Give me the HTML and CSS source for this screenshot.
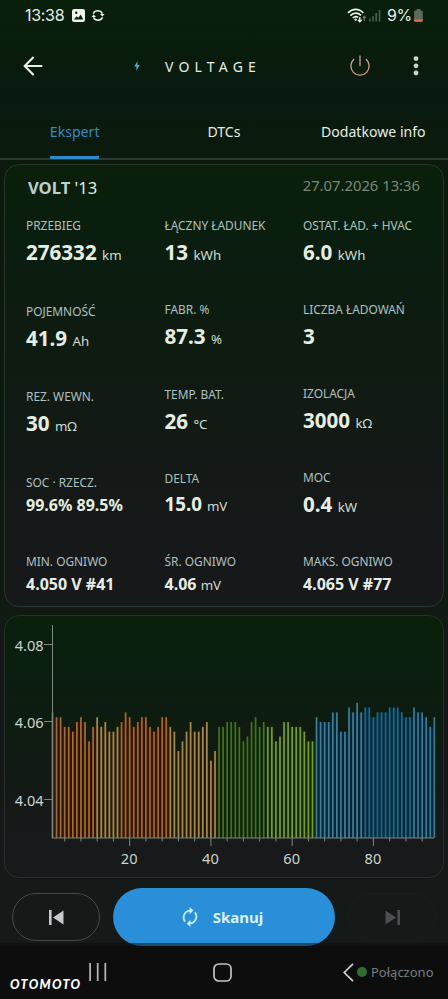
FILE: index.html
```html
<!DOCTYPE html>
<html lang="pl">
<head>
    <meta charset="UTF-8">
    <meta name="viewport" content="width=device-width, initial-scale=1.0">
    <title>Voltage</title>
    <link rel="stylesheet" href="styles.css">
</head>
<body>
    <div class="status-bar">
        <span class="clock">13:38</span>
        <svg class="status-image" width="13" height="13" viewBox="0 0 13 13">
            <rect width="13" height="13" rx="2.2" fill="#f1f5ee"/>
            <path d="M2 10.5 L4.6 7.2 L6.3 8.7 L8.7 5.6 L11.2 10.5 Z" fill="#0a1e0c"/>
            <circle cx="4.2" cy="3.8" r="1.2" fill="#0a1e0c"/>
        </svg>
        <svg class="status-sync" width="14" height="13" viewBox="0 0 14 13" fill="none" stroke="#e6eee2" stroke-width="1.5">
            <path d="M2.2 4.6 A5.2 5.2 0 0 1 11.4 4.6 M11.6 8.4 A5.2 5.2 0 0 1 2.4 8.4"/>
            <path d="M8.9 4.9 H13.6 L11.4 7.6 Z M5.1 8.1 H.4 L2.6 5.4 Z" fill="#e6eee2" stroke="none"/>
        </svg>
        <svg class="status-wifi" width="20" height="15" viewBox="0 0 20 15" fill="none" stroke="#eef4ea" stroke-width="1.7">
            <path d="M1 4.9 C5.5 .2 12 .2 16.3 4.9"/>
            <path d="M3.4 7.6 C6.6 4.4 11 4.4 14 7.4"/>
            <path d="M5.8 10 C7.6 8.3 9.6 8.3 11.2 9.4"/>
            <circle cx="8.6" cy="11.6" r="1.2" fill="#eef4ea" stroke="none"/>
            <path d="M12.8 9 V13.6 M10.9 11.8 L12.8 13.8 L14.7 11.8" stroke-width="1.3"/>
            <path d="M17.3 13 V8.4 M15.8 10 L17.3 8.2 L18.8 10" stroke="#66766a" stroke-width="1.2"/>
        </svg>
        <svg class="status-signal" width="12" height="13" viewBox="0 0 12 13" fill="#4b5d4e">
            <rect x="0" y="9.5" width="1.6" height="3"/>
            <rect x="3.2" y="7" width="1.6" height="5.5"/>
            <rect x="6.4" y="4" width="1.6" height="8.5"/>
            <rect x="9.7" y="1" width="1.6" height="11.5"/>
        </svg>
        <span class="battery-level">9%</span>
        <svg class="status-battery" width="9" height="13" viewBox="0 0 9 13">
            <path d="M2.6 0 H6.4 V1.4 H7.4 Q8.8 1.4 8.8 2.8 V11.4 Q8.8 12.8 7.4 12.8 H1.4 Q.1 12.8 .1 11.4 V2.8 Q.1 1.4 1.4 1.4 H2.6 Z" fill="#5c695c"/>
            <path d="M.1 10.6 H8.8 V11.4 Q8.8 12.8 7.4 12.8 H1.4 Q.1 12.8 .1 11.4 Z" fill="#dd6a50"/>
        </svg>
    </div>

    <div class="app-bar">
        <svg class="back" width="20" height="20" viewBox="0 0 20 20" fill="none" stroke="#e8efe6" stroke-width="2.1">
            <path d="M19.3 10 H2 M10.6 1 L1.7 10 L10.6 19"/>
        </svg>
        <svg class="bolt" width="6" height="10" viewBox="0 0 6 10">
            <path d="M3.6 0 L.3 5.6 H2.6 L2.1 10 L5.7 4 H3.3 Z" fill="#4fb4d4"/>
        </svg>
        <h1 class="title">VOLTAGE</h1>
        <svg class="power" width="20" height="22" viewBox="0 0 20 22" fill="none" stroke="#cf9c86" stroke-width="1.3">
            <path d="M4.2 4.1 A9.1 9.1 0 1 0 15.8 4.1"/>
            <path d="M10 .6 V11"/>
        </svg>
        <svg class="more" width="6" height="20" viewBox="0 0 6 20" fill="#c5d9c9">
            <circle cx="3" cy="2.6" r="2.4"/>
            <circle cx="3" cy="9.8" r="2.4"/>
            <circle cx="3" cy="17" r="2.4"/>
        </svg>
    </div>

    <div class="tabs">
        <div class="tab active"><span>Ekspert</span></div>
        <div class="tab"><span>DTCs</span></div>
        <div class="tab"><span>Dodatkowe info</span></div>
    </div>

    <div class="card stats">
        <div class="stats-header">
            <div class="car"><b>VOLT</b> '13</div>
            <div class="date">27.07.2026 13:36</div>
        </div>
        <div class="columns">
            <div class="column">
                <div class="stat"><div class="label">PRZEBIEG</div><div class="value">276332 <span>km</span></div></div>
                <div class="stat"><div class="label">POJEMNOŚĆ</div><div class="value">41.9 <span>Ah</span></div></div>
                <div class="stat"><div class="label">REZ. WEWN.</div><div class="value">30 <span>mΩ</span></div></div>
                <div class="stat"><div class="label">SOC · RZECZ.</div><div class="value small">99.6% 89.5%</div></div>
                <div class="stat"><div class="label">MIN. OGNIWO</div><div class="value small">4.050 V #41</div></div>
            </div>
            <div class="column">
                <div class="stat"><div class="label">ŁĄCZNY ŁADUNEK</div><div class="value">13 <span>kWh</span></div></div>
                <div class="stat"><div class="label">FABR. %</div><div class="value">87.3 <span>%</span></div></div>
                <div class="stat"><div class="label">TEMP. BAT.</div><div class="value">26 <span>°C</span></div></div>
                <div class="stat"><div class="label">DELTA</div><div class="value medium">15.0 <span>mV</span></div></div>
                <div class="stat"><div class="label">ŚR. OGNIWO</div><div class="value small">4.06 <span>mV</span></div></div>
            </div>
            <div class="column">
                <div class="stat"><div class="label">OSTAT. ŁAD. + HVAC</div><div class="value">6.0 <span>kWh</span></div></div>
                <div class="stat"><div class="label">LICZBA ŁADOWAŃ</div><div class="value">3</div></div>
                <div class="stat"><div class="label">IZOLACJA</div><div class="value">3000 <span>kΩ</span></div></div>
                <div class="stat"><div class="label">MOC</div><div class="value">0.4 <span>kW</span></div></div>
                <div class="stat"><div class="label">MAKS. OGNIWO</div><div class="value small">4.065 V #77</div></div>
            </div>
        </div>
    </div>

    <div class="card chart">
        <svg id="cells" width="438" height="261" viewBox="5 616 438 261"></svg>
    </div>

    <div class="actions">
        <button class="step">
            <svg width="15" height="15" viewBox="0 0 15 15" fill="#c3c9cc"><path d="M0 0 H2.6 V15 H0 Z M14.5 .4 V14.6 L4 7.5 Z"/></svg>
        </button>
        <button class="scan">
            <svg width="16" height="20" viewBox="0 0 16 20" fill="none" stroke="#c8ecff" stroke-width="1.8">
                <path d="M3 14.6 A6.9 6.9 0 0 1 8 3.6 M13 5.4 A6.9 6.9 0 0 1 8 16.4"/>
                <path d="M7.6 0 V7.2 L11.4 3.6 Z M8.4 20 V12.8 L4.6 16.4 Z" fill="#c8ecff" stroke="none"/>
            </svg>
            <span>Skanuj</span>
        </button>
        <button class="step disabled">
            <svg width="15" height="15" viewBox="0 0 15 15" fill="#4b4f51"><path d="M12.4 0 H15 V15 H12.4 Z M.5 .4 V14.6 L11 7.5 Z"/></svg>
        </button>
    </div>

    <div class="nav-bar">
        <div class="brand">OTOMOTO</div>
        <svg class="recents" width="18" height="18" viewBox="0 0 18 18" stroke="#b9b9b9" stroke-width="1.7"><path d="M1.1 0 V18 M8.7 0 V18 M16.3 0 V18"/></svg>
        <svg class="home" width="19" height="19" viewBox="0 0 19 19" fill="none" stroke="#c4c4c4" stroke-width="1.7"><rect x="1" y="1" width="17" height="17" rx="4.8"/></svg>
        <svg class="nav-back" width="11" height="19" viewBox="0 0 11 19" fill="none" stroke="#d0d0d0" stroke-width="1.7"><path d="M10 .8 L1.2 9.5 L10 18.2"/></svg>
        <span class="dot"></span>
        <span class="connection">Połączono</span>
    </div>

    <script>
        // Cell voltages as steps of 1.25 mV below the highest cell
        const cells = [
            2, 3, 3, 5, 5, 6, 4, 3, 4, 8, 5, 3, 5, 4, 6, 6, 5, 4, 2, 3,
            5, 4, 3, 3, 5, 6, 5, 3, 3, 5, 6, 10, 8, 6, 4, 6, 6, 5, 4, 12,
            10, 5, 5, 4, 4, 4, 5, 8, 7, 4, 3, 5, 4, 5, 5, 8, 7, 4, 4, 5,
            5, 5, 6, 8, 8, 3, 4, 4, 4, 2, 2, 6, 6, 1, 2, 0, 2, 1, 1, 3,
            2, 2, 2, 1, 1, 1, 2, 3, 3, 1, 2, 2, 3, 5, 3
        ];

        // Last cell of each module and the module colours: bar, gap
        const modules = [
            [4, '#9a6c42', '#2a1407'],
            [11, '#a86c30', '#2a1506'],
            [17, '#ab8c48', '#251c08'],
            [29, '#a86828', '#2c1505'],
            [41, '#a68c52', '#1f190b'],
            [53, '#4a7120', '#0a230a'],
            [65, '#7a9a38', '#12280b'],
            [77, '#417f93', '#06233a'],
            [89, '#1d6b82', '#04293f'],
            [95, '#3a7b92', '#06243a']
        ];

        const left = 52.5, step = 4.062, base = 838, top0 = 702.7;
        let svg = '';

        cells.forEach((level, i) => {
            const [, bar, gap] = modules.find(m => i + 1 <= m[0]);
            const x = left + i * step;
            const y = top0 + level * 4.83;
            const next = cells[i + 1];
            if (next !== undefined) {
                const gapY = top0 + Math.max(level, next) * 4.83;
                svg += `<rect x="${x}" y="${gapY}" width="${step}" height="${base - gapY}" fill="${gap}"/>`;
            }
            svg += `<rect x="${x - 0.85}" y="${y}" width="1.7" height="${base - y}" fill="${bar}"/>`;
        });

        // Axes, ticks and labels
        svg += `<path class="axis" d="M52.5 625 V838.5"/>`;
        svg += `<path class="axis" d="M52.5 838 H434"/>`;
        [['4.08', 644.5], ['4.06', 721.5], ['4.04', 799.5]].forEach(([text, y]) => {
            svg += `<path class="axis" d="M44 ${y} H52.5"/><text x="43.7" y="${y + 6.3}" text-anchor="end">${text}</text>`;
        });
        for (let n = 4; n < 95; n += 4) {
            const x = left + (n - 1) * step;
            const major = n % 20 === 0;
            svg += `<path class="axis" d="M${x} 838 V${major ? 846 : 841.5}"/>`;
            if (major) svg += `<text x="${x - 0.5}" y="864" text-anchor="middle">${n}</text>`;
        }
        document.getElementById('cells').innerHTML = svg;
    </script>
</body>
</html>
```
FILE: styles.css
```css
* {
    box-sizing: border-box;
}

body {
    margin: 0;
    width: 448px;
    height: 999px;
    overflow: hidden;
    display: flex;
    flex-direction: column;
    background: linear-gradient(#08200b 0, #091c0c 60px, #081a10 95px, #0a1a0c 135px, #0b190d 300px, #0f1b10 600px, #141817 640px, #151918 943px);
    color: #e6eee4;
    font-family: "Noto Sans", sans-serif;
}

svg {
    display: block;
    flex: none;
}

.status-bar {
    height: 30px;
    padding-left: 25px;
    display: flex;
    align-items: center;
    font-family: Inter, sans-serif;
    font-size: 16px;
}

.clock {
    width: 47px;
    letter-spacing: -0.3px;
}

.status-sync {
    margin-left: 6px;
}

.status-wifi {
    margin-left: 242px;
}

.status-signal {
    margin-left: 2px;
}

.battery-level {
    width: 27px;
    margin-left: 6px;
    letter-spacing: -0.3px;
}

.app-bar {
    height: 72px;
    padding-left: 23px;
    display: flex;
    align-items: center;
}

.bolt {
    margin-left: 91px;
}

.title {
    margin: 0 0 0 25px;
    width: 185px;
    font-size: 14px;
    font-weight: 400;
    letter-spacing: 5.2px;
}

.more {
    margin-left: 43px;
}

.tabs {
    height: 58px;
    display: flex;
    border-bottom: 2px solid #2c3b30;
}

.tab {
    flex: 1;
    display: flex;
    justify-content: center;
    font-size: 14.1px;
    line-height: 60px;
    white-space: nowrap;
}

.tab span {
    height: 57px;
}

.tab.active span {
    color: #348cc5;
    border-bottom: 3px solid #2d8bc9;
    border-radius: 1px;
}

.card {
    margin: 4px 4px 0;
    border: 1px solid #2a362c;
    border-radius: 15px;
    background: linear-gradient(#09200a, #0a1d0f 20%, #0f1b11 45%, #151918 75%, #17181b);
}

.stats {
    height: 443px;
    padding: 11px 0 0 21px;
}

.stats-header {
    height: 40px;
    padding: 0 23px 0 2px;
    display: flex;
    justify-content: space-between;
    line-height: 23px;
}

.car {
    font-size: 16.6px;
}

.car b {
    color: #bccfd2;
}

.date {
    font-size: 14.8px;
    line-height: 19px;
    color: #78887a;
}

.columns {
    height: 382px;
    display: grid;
    grid-template-columns: 138.5px 138.5px 1fr;
}

.column {
    display: flex;
    flex-direction: column;
    justify-content: space-between;
}

.label {
    margin-bottom: 1px;
    font-size: 11.9px;
    line-height: 18px;
    color: #adc2c0;
    white-space: nowrap;
}

.value {
    font-size: 20.6px;
    font-weight: 700;
    line-height: 34.5px;
    white-space: nowrap;
}

.value.medium {
    font-size: 18.8px;
    line-height: 32.5px;
}

.value.small {
    font-size: 16px;
    line-height: 27.5px;
}

.value span {
    font-size: 13.3px;
    font-weight: 400;
    line-height: 1;
    color: #d0dcd2;
}

.chart {
    margin-top: 8px;
    height: 263px;
    border-color: #2a302d;
    background: linear-gradient(#09200a, #0b1e10 22%, #0e1c10 40%, #131a16 65%, #17191a 85%);
}

.chart text {
    font-size: 14.6px;
    fill: #ccd4ce;
}

.axis {
    stroke: #7d887e;
    stroke-width: 1;
    fill: none;
}

.actions {
    height: 65px;
    padding: 10px 12px 0;
    display: flex;
    align-items: flex-start;
    gap: 13px;
}

button {
    display: flex;
    align-items: center;
    justify-content: center;
    padding: 0;
    border: 0;
    font-family: inherit;
}

.step {
    width: 88px;
    height: 48px;
    margin-top: 5px;
    border: 1px solid #44494a;
    border-radius: 24px;
    background: none;
}

.step.disabled {
    border-color: #1a1f1e;
}

.scan {
    width: 222px;
    height: 58px;
    padding-right: 3px;
    gap: 15px;
    border-radius: 29px;
    background: #288fd8;
    color: #d8f2ff;
    font-size: 15px;
    font-weight: 700;
}

/* system bar, the scan button shows dimmed through its top edge */
.nav-bar {
    position: relative;
    flex: 1;
    display: flex;
    align-items: flex-start;
    padding: 20px 0 0 10px;
    background: linear-gradient(rgba(10, 12, 12, 0.5) 3px, #0d0d0d 3px);
}

.brand {
    width: 79px;
    margin-top: 14px;
    font-family: Lato, sans-serif;
    font-size: 12.6px;
    font-weight: 900;
    font-style: italic;
    line-height: 16px;
    letter-spacing: 1.3px;
    color: #ffffff;
}

.home {
    margin-left: 106px;
}

.nav-back {
    margin-left: 111px;
}

.dot {
    width: 10px;
    height: 10px;
    margin: 4px 4px 0 3px;
    border-radius: 50%;
    background: #2e6f31;
}

.connection {
    font-size: 13px;
    line-height: 18px;
    color: #777c82;
}
```
